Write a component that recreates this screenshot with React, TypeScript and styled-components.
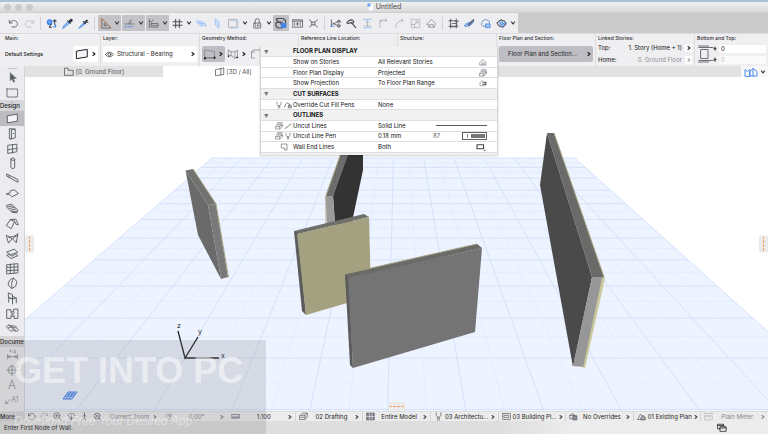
import React, { ReactNode } from "react";
import styled, { createGlobalStyle, css } from "styled-components";

const Global = createGlobalStyle`
  *, *::before, *::after { box-sizing: border-box; }
  body { margin: 0; }
  body, button, input {
    font-family: Inter, "Liberation Sans", sans-serif;
    font-size: 6px;
    line-height: 8px;
    color: #111113;
  }
  button { border: 0; padding: 0; margin: 0; background: none; }
`;

/* ---------- icons ---------- */

const INK = "#4a4f57";
const BLUE = "#3f82ea";

const Svg = styled.svg<{ $w: number; $h: number }>`
  display: block;
  flex: none;
  width: ${(p) => p.$w}px;
  height: ${(p) => p.$h}px;
  fill: none;
  stroke: currentColor;
  stroke-linecap: round;
  stroke-linejoin: round;
`;

type IconProps = { w?: number; h?: number; box?: string; children: ReactNode };
const Icon = ({ w = 12, h = 12, box = "0 0 24 24", children }: IconProps) => (
  <Svg $w={w} $h={h} viewBox={box} strokeWidth={1.7} aria-hidden="true">
    {children}
  </Svg>
);

const Chevron = () => (
  <Icon w={4} h={6} box="0 0 8 12">
    <path d="M2 3l4 3-4 3" strokeWidth={2.2} />
  </Icon>
);
const Down = () => (
  <Icon w={6} h={4} box="0 0 12 8">
    <path d="M3 2l3 4 3-4" strokeWidth={2.4} />
  </Icon>
);

const icons: Record<string, ReactNode> = {
  undo: <path d="M3 5v6h6M3.500 10.500C7 5.500 13 4 17.500 7c5 3.500 4 10-1 12.500h-8" />,
  redo: <path d="M21 5v6h-6M20.500 10.500C17 5.500 11 4 6.500 7c-5 3.500-4 10 1 12.500h8" stroke="#b4b7bb" />,
  find: (
    <>
      <circle cx="8" cy="9" r="5" fill="#67a3f2" stroke={BLUE} strokeWidth="2.500" />
      <path d="M11 14l-4 6h5M19 5v9M16 7l3-3 3 3" stroke="#3b4654" strokeWidth="2.200" />
      <path d="M16 19h5v-4" stroke={BLUE} strokeWidth="2.500" />
    </>
  ),
  dropper: (
    <>
      <path d="M2 22l2-5 9-9 3 3-9 9z" stroke={BLUE} fill="#8fbcf5" />
      <path d="M12 6l6 6M15 8l4-5c2-1 4 1 3 3l-5 4z" stroke="#2c3442" fill="#2c3442" strokeWidth="2.200" />
    </>
  ),
  syringe: (
    <>
      <path d="M2 22l5-6 6-6 2 3-6 5z" stroke={BLUE} fill="#8fbcf5" />
      <path d="M11 7l6 6M13 10l6-6 2 2-6 6zM19 9l3 1" stroke="#2c3442" fill="#2c3442" strokeWidth="2" />
    </>
  ),
  ruler: (
    <>
      <path d="M4 2v20h19z" stroke="#575c63" />
      <path d="M9 12v5h5z" stroke="#575c63" />
      <path d="M2 2v20M4 1l19 18" stroke="#e2935b" strokeWidth="1.600" />
    </>
  ),
  snap: (
    <>
      <path d="M2 13h20M9 13l9-9M13 5v8" stroke="#6d737c" />
      <path d="M2 19h16" stroke={BLUE} strokeDasharray="4 3" />
    </>
  ),
  tracker: (
    <>
      <path d="M3 3v18M3 8h5l3-4" stroke="#575c63" />
      <rect x="7" y="12" width="15" height="8" rx="1" stroke="#575c63" />
      <path d="M10 16h3M15 16h5" stroke="#575c63" />
    </>
  ),
  grid: <path d="M8 3v18M16 3v18M2 8h20M2 16h20" strokeWidth="2.200" />,
  planeA: <path d="M1 7h13l9 10H10zM6 7l9 10M5 12h13" stroke="#8db9f1" fill="#cfe1fb" strokeWidth="1.400" />,
  planeB: <path d="M8 2l7 6v14l-7-6z" stroke="#8db9f1" fill="#cfe1fb" />,
  box: (
    <>
      <path d="M5 6h17v16H5" stroke="#a9c9f3" />
      <rect x="2" y="3" width="17" height="17" stroke="#a2a6ab" />
    </>
  ),
  lock: (
    <>
      <rect x="4" y="11" width="15" height="11" rx="1" />
      <path d="M7 11V6a4.500 4.500 0 019 0v5M8 15v3M12 15v3M15 15v3" />
    </>
  ),
  trace: (
    <>
      <path d="M3 3h13l5 4v5M3 3v3l4 4h8M2 11h8l4 4v7H6l-4-4z" strokeWidth="2.400" />
      <rect x="13" y="13" width="9" height="8" fill={BLUE} stroke={BLUE} />
    </>
  ),
  dims: (
    <>
      <rect x="1" y="4" width="22" height="16" />
      <path d="M5 10v6M9 13h5M12 10v6M18 10v6M1 7h22" />
    </>
  ),
  cross: <path d="M3 4l6 5M21 4l-6 5M3 20l6-5M21 20l-6-5M9 9h6v6H9z" />,
  trim: (
    <>
      <path d="M3 4v14M6 14l15-9M6 11l15 8" />
      <path d="M1 18h8" stroke={BLUE} />
      <circle cx="19" cy="8" r="3" />
      <circle cx="19" cy="17" r="3" />
    </>
  ),
  hammer: <path d="M2 11c2-5 6-7 11-7l4 4-3 5-4-3-4 2zM12 10l9 11" strokeWidth="2.600" />,
  align: (
    <>
      <path d="M3 3h18M3 21h18" stroke="#8cb6ee" />
      <path d="M12 6v12M8 10l4-4 4 4M6 17h12" stroke="#a8adb4" />
    </>
  ),
  corner: <path d="M4 21V5h16M9 9l-5-4M17 2v6" stroke="#a9adb2" />,
  fillet: <path d="M4 20C5 11 11 5 20 5M16 9l4-4-4-3" stroke="#a9adb2" />,
  resize: (
    <>
      <rect x="3" y="3" width="18" height="18" stroke="#b4b7bb" strokeDasharray="3 2" />
      <path d="M3 14h7v7M10 14l7-7M12 7h5v5" stroke="#a9adb2" />
    </>
  ),
  house: <path d="M2 13L12 3l10 10-3 3v4H6v-4zM8 20v-6h8v6" stroke="#8d9198" />,
  group: (
    <>
      <rect x="6" y="6" width="13" height="13" />
      <path d="M2 6h5M6 2v5M18 2v20M15 7h8M2 18h20M6 15v7M9 12h8" />
    </>
  ),
  pencil: (
    <>
      <path d="M2 15c4-6 9-3 19-8-4 9-11 12-19 11z" fill="#a3c6f8" stroke={BLUE} />
      <path d="M9 14L20 3l2 2L11 16z" stroke="#4a4f57" fill="#6b727c" />
    </>
  ),
  cloud: (
    <>
      <path d="M3 13l3-7 7-3 7 4 1 7-5 4H7z" stroke="#5d87c0" />
      <rect x="13" y="13" width="9" height="8" fill="#a3c6f8" stroke={BLUE} />
    </>
  ),
  cube: (
    <>
      <path d="M2 11l8-7 9 3 3 6-7 7-9-3z" strokeWidth="2.200" />
      <circle cx="12" cy="12" r="4" stroke={BLUE} fill="#8fbcf5" />
      <path d="M17 12l5-1M15 20l3-6" stroke={BLUE} />
    </>
  ),
  cursor: <path d="M7 2v17l4-4 3 7 3-1-3-7h6z" fill="#565b63" stroke="#565b63" strokeWidth="1" />,
  marquee: <rect x="2" y="4" width="21" height="16" strokeDasharray="2.500 2" />,
  wall: <path d="M3 7l18-3v13L3 20z" fill="#f3f4f6" />,
  door: <path d="M7 3l10 1v16l-7 2H7zM17 4l-7 1v17M13 12h1" />,
  window: <path d="M4 6l16-2v14L4 21zM12 5v15M4 14l16-2" />,
  column: <path d="M9 4v15c0 3 7 3 7 0V4M9 4c0 3 7 3 7 0s-7-3-7 0" />,
  beam: <path d="M2 4l20 10v5L2 8zM6 6v4" />,
  slab: <path d="M1 13l6-2 1-4 7-2 8 7-12 6-4-4z" />,
  stair: <path d="M2 6l8-2 12 11-2 5-9-1L2 10zM4 9l8-2M7 12l8-2M10 15l8-2M11 18l9-1" />,
  roof: <path d="M1 15L8 5l10-1 5 10h-4l-3-6-6 13zM8 5l8 3" />,
  shell: <path d="M1 6c7 5 13 4 21-3l-3 17-7-8-7 8zM5 10l7 2 9-6" />,
  sheet: <path d="M2 9l13-5 7 6-13 4zM2 15l4-1 5 3 7-4 4 3-12 5z" />,
  curtain: <path d="M2 5l20-2v17L2 22zM8 4v17M15 4v17M2 10l20-1M2 16l20-1" />,
  morph: <path d="M4 14C4 7 9 3 14 2l6 6-2 9-7 4zM14 2c-4 6-4 12-3 19" />,
  chair: <path d="M5 2l7 3v8l-7-3zM5 10v9M5 10l7 3 7-2-7-3M12 13v9M19 11v9" />,
  zone: <path d="M2 5h7v4h5V4h8v17h-7v-4H9v4H2zM9 10l6 6M15 10l-6 6" />,
  mesh: <path d="M1 8c6-6 10 3 14-2l8 9c-5 6-9-3-13 2zM5 5l9 10M10 6l8 10M4 11c6-5 10 3 15-2" strokeWidth="1.500" />,
  dimension: (
    <>
      <path d="M2 16h20M3 12v8M21 12v8M8 3v4M11 7h1M15 8h3l-2-2 2-1-2-2" />
      <path d="M7 14l-4 2 4 2M17 14l4 2-4 2" />
    </>
  ),
  level: (
    <>
      <circle cx="11" cy="13" r="7" />
      <path d="M11 3v20M1 13h20M21 4v4" />
    </>
  ),
  rotate: <path d="M4 10a9 9 0 111 7M4 4v6h6" />,
  rotateR: <path d="M20 10a9 9 0 10-1 7M20 4v6h-6" stroke="#a0a3a8" />,
  zoomIn: <><circle cx="10" cy="10" r="8" /><path d="M16 16l6 6M7 10h6M10 7v6" /></>,
  orbit: <path d="M8 14C-2 10 5 4 12 4s14 6 4 10M12 10v10M8 16l4 5 4-5" />,
  walk: <path d="M12 2v6M8 11l4-3 4 3M12 8v8l4 6M12 16l-5 6" />,
  zoomFit: <><circle cx="11" cy="11" r="8" /><path d="M17 17l5 5M7 7l8 8M15 7l-8 8" /></>,
  angle: <path d="M3 12c3-8 12-8 16-2M19 4v7h-6M8 13l5-4 5 5-5 6z" stroke="#8b8f95" />,
  scale: <path d="M1 7h22v9H1zM5 12v4M10 12v4M14 12v4M19 12v4" />,
  layers: <path d="M6 7l4-4h12v11l-4 4M2 9h14v11H2zM16 9l6-6M2 14h14" />,
  parts: <><rect x="2" y="3" width="20" height="18" fill="#7d828a" /><path d="M2 12h20M9 4v16M16 4v16" stroke="#eee" /></>,
  penset: <path d="M6 2v8l4 4v8M18 2v8l-4 4v8M10 14h4" />,
  mvo: <><rect x="1" y="4" width="22" height="16" rx="2" /><rect x="6" y="9" width="12" height="6" /></>,
  override: <><path d="M2 9l7-5 7 5H2v9h7" /><rect x="11" y="10" width="10" height="11" fill="#8b9097" /></>,
  renovate: <><path d="M2 20l7-14 6 6M2 20h9" /><path d="M11 14l5-5 6 5v7H11z" fill="#a4a8ae" /></>,
  ruler2: <path d="M2 4h20M2 2v4M22 2v4M2 10h20v11H2zM7 10v4M12 10v4M17 10v4" stroke="#b2b4b8" />,
  windows: <><rect x="2" y="3" width="14" height="11" /><rect x="8" y="9" width="14" height="11" fill="#ececec" /><path d="M8 12h14M2 6h14" /></>,
  storyHouse: <path d="M3 12l9-8 9 8v9H3zM8 21v-6M12 21V11M16 21v-6" stroke="#74797f" />,
  stack: <path d="M2 14h12v7H2zM2 14l6-5h14v6l-8 6M14 14l8-5M5 6h17M8 2h14" stroke="#5d636b" />,
  range: <><path d="M3 11l7-7 7 7M3 11v9h14" stroke="#74797f" /><path d="M11 11h11M11 16h11M19 9v9" stroke="#3a3f46" strokeWidth="2.200" /></>,
  wallEnd: <path d="M5 3h16v18h-7v-6H5z" />,
  plan: <path d="M2 3h8v5h12v12H2z" strokeWidth="1.800" />,
  view3d: <path d="M2 6l12-2v15L2 21zM14 4l7-2v16l-7 1" strokeWidth="1.800" />,
  eye: <><path d="M1 12c6-8 16-8 22 0-6 8-16 8-22 0z" /><circle cx="12" cy="12" r="4" /></>,
  wallGeo: <><path d="M2 4l19 3v12L2 20z" stroke="#85898f" /><path d="M2 20h20" stroke="#6b7078" strokeDasharray="3 2" /><path d="M21 19v1M2 20v1" stroke="#222" strokeWidth="4" /></>,
  curved: <><path d="M3 4c5 5 12 5 18 0v13l-6 4-4-5-8-2zM8 7v9M16 7v13" stroke="#8a8e95" /><path d="M20 19h1M3 16v1" stroke="#222" strokeWidth="3" /></>,
  boxGeo: <path d="M3 8l4-4h14v13M3 8v12h6M3 8h6" stroke="#8a8e95" />,
  penY: <path d="M6 3v7l4 4v7M18 3v7l-4 4v7M10 14h4" />,
  fillCurve: <><path d="M2 18C5 6 9 3 14 8l6 5" strokeWidth="2.200" /><rect x="13" y="13" width="9" height="8" rx="1" fill="#b8bbc0" /></>,
  slash: <path d="M3 20L21 6" strokeWidth="2.200" />,
  endBoth: <><rect x="1" y="5" width="18" height="11" stroke="#3e434a" strokeWidth="3" /><path d="M22 20h1" stroke="#222" strokeWidth="3" /></>,
};

const Glyph = ({ name, size = 12 }: { name: string; size?: number }) => (
  <Icon w={size} h={size}>{icons[name]}</Icon>
);

/* ---------- window ---------- */

const Window = styled.div`
  position: relative;
  display: flex;
  flex-direction: column;
  min-height: 100vh;
  overflow: hidden;
  background: #ececee;
  border-top: 2px solid #a9c3d3;
`;

const TitleBar = styled.header`
  display: grid;
  grid-template-columns: 1fr auto 1fr;
  align-items: center;
  height: 11px;
  padding: 0 4px;
  background: linear-gradient(#efefef, #d9d9d9);
  border-bottom: 1px solid #cfcfcf;
`;
const Lights = styled.div`
  display: flex;
  gap: 4px;
`;
const Light = styled.button`
  width: 7px;
  height: 7px;
  border-radius: 50%;
  background: #cacaca;
`;
const Title = styled.h1`
  display: flex;
  align-items: center;
  gap: 2px;
  margin: 0;
  font-size: 7px;
  font-weight: 400;
  color: #4c4c4c;
`;

const ToolbarRow = styled.div`
  display: flex;
  height: 20px;
  background: #cbcbcb;
`;
const Toolbar = styled.div`
  display: flex;
  align-items: center;
  padding: 0 1px 0 5px;
  background: #eeeef0;
  color: ${INK};
`;
const Tool = styled.button<{ $on?: boolean }>`
  display: flex;
  align-items: center;
  justify-content: center;
  width: 16px;
  height: 16px;
  border-radius: 1px;
  color: inherit;
  background: ${(p) => (p.$on ? "#c0c0c5" : "none")};
`;
const Toggle = styled.button`
  display: flex;
  align-items: center;
  justify-content: space-between;
  width: 23px;
  height: 16px;
  margin-left: 1px;
  padding: 0 1px 0 2px;
  border-radius: 1px;
  color: #34383e;
  background: #c3c3c8;
`;
const DropArrow = styled.button`
  display: flex;
  justify-content: center;
  width: 8px;
  color: #2f3338;
`;
const Divider = styled.span`
  width: 6px;
  height: 13px;
  background: linear-gradient(#d2d2d5, #d2d2d5) center / 1px 100% no-repeat;
`;

/* ---------- info bar ---------- */

const InfoBar = styled.div`
  display: grid;
  grid-template-columns: 100px repeat(6, 99px) minmax(0, 1fr);
  height: 33px;
  background: #efeff1;
  border-top: 1px solid #dcdcde;
`;
const Section = styled.section<{ $first?: boolean }>`
  display: flex;
  flex-direction: column;
  min-width: 0;
  padding: 0 2px 0 ${(p) => (p.$first ? 4 : 2)}px;
  border-left: 1px solid ${(p) => (p.$first ? "transparent" : "#dddddf")};
`;
const Caption = styled.h2`
  margin: 0;
  font-size: 5px;
  line-height: 9px;
  font-weight: 500;
  white-space: nowrap;
  color: #2c2c2f;
`;
const Body = styled.div`
  flex: 1;
  display: flex;
  align-items: center;
  padding-bottom: 1px;
`;
const Spacer = styled.span`
  flex: 1;
`;
const Field = styled.button<{ $tone?: "dark" | "plain"; $grow?: boolean }>`
  display: flex;
  align-items: center;
  justify-content: space-between;
  gap: 3px;
  height: 16px;
  padding: 0 2px;
  border-radius: 2px;
  white-space: nowrap;
  color: #1c1e22;
  background: ${(p) => (p.$tone === "dark" ? "#bdbdc3" : p.$tone === "plain" ? "none" : "#fff")};
  ${(p) => p.$grow && css`flex: 1;`}
`;
const SettingsName = styled.span`
  font-size: 5px;
  font-weight: 500;
`;
const StoryGrid = styled.div`
  flex: 1;
  display: grid;
  grid-template-columns: auto 1fr 7px;
  gap: 3px;
  padding-bottom: 1px;
  align-items: center;
`;
const Story = styled.span<{ $dim?: boolean }>`
  text-align: right;
  color: ${(p) => (p.$dim ? "#8e8e91" : "inherit")};
`;
const Step = styled.button<{ $dim?: boolean }>`
  display: flex;
  align-items: center;
  justify-content: center;
  height: 8px;
  border-radius: 1px;
  background: #fff;
  color: ${(p) => (p.$dim ? "#aaa" : "#222")};
`;
const Inputs = styled.div`
  flex: 1;
  display: flex;
  flex-direction: column;
  gap: 3px;
  min-width: 0;
  margin-left: 2px;
`;
const NumberBox = styled.input`
  width: 100%;
  height: 8px;
  padding: 0 2px;
  border: 0;
  background: #fff;
  &:disabled { color: #b8b8b8; background: #fafafa; }
`;

/* ---------- work area ---------- */

const Work = styled.div`
  flex: 1;
  display: grid;
  grid-template-columns: 25px minmax(0, 1fr);
`;
const Toolbox = styled.nav`
  display: flex;
  flex-direction: column;
  background: #ececee;
  border-right: 1px solid #d4d4d6;
  color: #565b63;
`;
const Grip = styled.span`
  align-self: center;
  width: 9px;
  height: 1px;
  margin: 2px 0 1px;
  background: #c6c6c8;
`;
const ToolItem = styled.button<{ $on?: boolean; $dim?: boolean }>`
  display: flex;
  align-items: center;
  justify-content: center;
  height: 15px;
  font-size: 12px;
  font-weight: 300;
  color: ${(p) => (p.$dim ? "#8c8f94" : "inherit")};
  background: ${(p) => (p.$on ? "#bcbcc1" : "none")};
`;
const ToolGroup = styled.h3`
  margin: 0;
  height: 11px;
  overflow: hidden;
  font-size: 6px;
  line-height: 11px;
  font-weight: 500;
  color: #222;
  background: #d6d6d8;
`;
const Small = styled.span`
  font-size: 7px;
  font-weight: 400;
`;

const Main = styled.main`
  display: flex;
  flex-direction: column;
  min-width: 0;
`;
const Tabs = styled.div`
  display: grid;
  grid-template-columns: 138px 140px 1fr 27px;
  height: 11px;
  background: #e2e2e3;
`;
const Tab = styled.button<{ $active?: boolean }>`
  display: flex;
  align-items: center;
  justify-content: center;
  gap: 2px;
  color: #4c4e52;
  background: ${(p) => (p.$active ? "#fff" : "none")};
`;
const CornerMenu = styled.button`
  grid-column: 4;
  display: flex;
  align-items: center;
  justify-content: center;
  gap: 2px;
  color: #2e3238;
  background: #f8f8f8;
`;
const Canvas = styled.div`
  position: relative;
  flex: 1;
  min-height: 300px;
  background: #fff;
`;
const Scene = styled.svg`
  position: absolute;
  inset: 0;
  width: 100%;
  height: 100%;
`;
const EdgeHandle = styled.button<{ $side: "left" | "right" | "bottom" }>`
  position: absolute;
  display: flex;
  align-items: center;
  justify-content: center;
  border-radius: 1px;
  background: #ebebec;
  ${(p) =>
    p.$side === "bottom"
      ? css`left: 50%; bottom: 0; width: 17px; height: 9px; transform: translateX(-50%);`
      : css`top: 50%; ${p.$side}: 0; width: 9px; height: 17px; transform: translateY(-50%);`}
`;
const Dashes = styled.span<{ $row?: boolean }>`
  ${(p) =>
    p.$row
      ? css`width: 15px; height: 1px; background: repeating-linear-gradient(90deg, #f1a45f 0 3px, transparent 3px 4px);`
      : css`width: 1px; height: 15px; background: repeating-linear-gradient(#f1a45f 0 3px, transparent 3px 4px);`}
`;

/* Floor grid: one vanishing point, evenly spaced cells in depth. */
const VX = 397;
const VY = -2;
const TOP = 158;
const BOTTOM = 440;
const depths = Array.from({ length: 24 }, (_, i) => -2 + i / 2);
const spokes = Array.from({ length: 25 }, (_, i) => -6 + i / 2);
const slope = (n: number) => -0.0225 + 0.189 * n;
const rayX = (n: number, y: number) => VX + slope(n) * (y - VY);

const MAJOR = "#d6e2fb";
const MINOR = "#e5edfd";

const Model = () => (
  <Scene viewBox="25 77 743 334" preserveAspectRatio="xMidYMid slice" role="img" aria-label="3D view">
    <path
      d={`M${rayX(-6, TOP)} ${TOP}H${rayX(6, TOP)}L${rayX(6, BOTTOM)} ${BOTTOM}H${rayX(-6, BOTTOM)}z`}
      fill="#edf3ff"
    />
    {depths.map((k) => {
      const y = 2880 / (16 - k) + VY;
      return (
        <path key={k} d={`M${rayX(-6, y)} ${y}H${rayX(6, y)}`} stroke={Number.isInteger(k) ? MAJOR : MINOR} />
      );
    })}
    {spokes.map((n) => (
      <path
        key={n}
        d={`M${rayX(n, TOP)} ${TOP}L${rayX(n, BOTTOM)} ${BOTTOM}`}
        stroke={Number.isInteger(n) ? MAJOR : MINOR}
      />
    ))}
    {/* far left wall */}
    <path d="M185.500 170.500L208 205L221 279L198 235z" fill="#6a6a6a" />
    <path d="M185.500 170.500L193 169L216 204L208 205z" fill="#727271" />
    <path d="M208 205L216 204L228 277L221 279z" fill="#7a7a7a" />
    <path d="M193 169L216 204L228.500 277.500" stroke="#aaa683" fill="none" />
    {/* rear wall */}
    <path d="M333 196L349 150H363V170L352 222L335 225z" fill="#333" />
    <path d="M325.500 196L342 150H350L333 196z" fill="#6c6c6a" />
    <path d="M325.500 196H333L335 225H327z" fill="#9a9a9a" />
    <path d="M342 150L326 196V225" stroke="#aba985" fill="none" />
    {/* olive wall */}
    <path d="M294 231L364 214L369 217L298 234z" fill="#6f6f6c" />
    <path d="M294 231L298 233L306 315L302 311z" fill="#5c5c5c" />
    <path d="M297 234L369 217L371 296L306 315z" fill="#a3a17f" />
    {/* front wall */}
    <path d="M345 274L477 244L482 248L348 279z" fill="#6a6a68" />
    <path d="M345 274L477 244" stroke="#a4a17d" />
    <path d="M345 274L349 278L353 368L350 365z" fill="#5c5c5c" />
    <path d="M348 278L482 248L475 332L353 368z" fill="#747474" />
    {/* right wall */}
    <path d="M547 133L540 185L573 367L592 277z" fill="#4a4a4a" />
    <path d="M547 133H554L604 277L592 277z" fill="#6a6a69" />
    <path d="M554 133L604 277" stroke="#aaa782" />
    <path d="M592 277L604 277L584 367L573 366z" fill="#979797" />
    <path d="M602 278H605L585 368H583z" fill="#cbc99c" />
    {/* axes */}
    <g stroke="#222" strokeWidth="1.300" fill="none">
      <path d="M178 331l7 27 13-21M185 358h34" />
    </g>
    <g fill="#222" fontFamily="Inter, sans-serif" fontSize="7">
      <text x="177" y="328">z</text>
      <text x="198" y="334">y</text>
      <text x="221" y="358">x</text>
    </g>
    {/* editing plane */}
    <g stroke={BLUE} strokeWidth="1" fill="#cfe0fb">
      <path d="M63 399l5-7h9l-5 7z" />
      <path d="M66 399l5-7M69 399l5-7M65 396h9M67 394h9" />
    </g>
  </Scene>
);

/* ---------- floor plan palette ---------- */

const Palette = styled.div`
  position: absolute;
  z-index: 2;
  top: 44px;
  left: 260px;
  width: 238px;
  padding-bottom: 2px;
  background: #f0f0f0;
  border-left: 1px solid #d6d6d8;
  border-right: 1px solid #d6d6d8;
  box-shadow: 0 1px 2px rgba(0, 0, 0, 0.2);
`;
const PaletteTable = styled.table`
  width: 100%;
  height: 107px;
  table-layout: fixed;
  border-collapse: collapse;
  tr { height: 10px; }
  td, th {
    padding: 0;
    border-bottom: 1px solid #dfdfe1;
    white-space: nowrap;
    text-align: left;
    line-height: 8px;
  }
`;
const GroupRow = styled.tr`
  background: #f1f1f2;
`;
const SettingRow = styled.tr`
  background: #fff;
`;
const GroupName = styled.th`
  font-weight: 700;
`;
const FoldCell = styled.td`
  width: 13px;
`;
const Fold = styled.button`
  display: flex;
  margin-left: 3px;
  color: #77797d;
`;
const Pair = styled.span`
  display: flex;
  align-items: center;
  justify-content: center;
  gap: 1px;
  color: ${INK};
`;
const EndCell = styled.div`
  display: flex;
  align-items: center;
  justify-content: flex-end;
  padding-right: 10px;
  color: #555a61;
`;
const LineSample = styled.span`
  width: 51px;
  height: 1px;
  background: #5c5c5c;
`;
const PenSwatch = styled.button`
  display: flex;
  gap: 3px;
  width: 25px;
  height: 8px;
  padding: 1px 1px 1px 4px;
  border: 1px solid #626262;
  background: #fff;
`;
const PenTick = styled.span`
  width: 1px;
  background: #888;
`;
const PenInk = styled.span`
  flex: 1;
  background: #777;
`;

type PaletteRow = { title?: string; label?: string; value?: string; lead?: string[]; extra?: string; end?: ReactNode };
const paletteRows: PaletteRow[] = [
  { title: "FLOOR PLAN DISPLAY" },
  { label: "Show on Stories", value: "All Relevant Stories", end: <Glyph name="storyHouse" size={8} /> },
  { label: "Floor Plan Display", value: "Projected", end: <Glyph name="stack" size={8} /> },
  { label: "Show Projection", value: "To Floor Plan Range", end: <Glyph name="range" size={8} /> },
  { title: "CUT SURFACES" },
  { label: "Override Cut Fill Pens", value: "None", lead: ["penY", "fillCurve"] },
  { title: "OUTLINES" },
  { label: "Uncut Lines", value: "Solid Line", lead: ["stack", "slash"], end: <LineSample /> },
  {
    label: "Uncut Line Pen",
    value: "0.18 mm",
    lead: ["stack", "penY"],
    extra: "87",
    end: <PenSwatch aria-label="Pen 87"><PenTick /><PenInk /></PenSwatch>,
  },
  {
    label: "Wall End Lines",
    value: "Both",
    lead: ["wallEnd"],
    end: <Icon w={12} h={8} box="0 0 24 22">{icons.endBoth}</Icon>,
  },
];

/* ---------- status ---------- */

const StatusBar = styled.div`
  display: grid;
  grid-template-columns: 25px 79px 56px 67px repeat(8, minmax(0, 1fr));
  height: 10px;
  background: #ececed;
  border-top: 1px solid #dcdcde;
  color: ${INK};
`;
const More = styled.button`
  text-align: left;
  font-weight: 500;
  color: #222;
  background: #d6d6d8;
`;
const NavTools = styled.div`
  display: flex;
  align-items: center;
  justify-content: space-around;
`;
const NavButton = styled.button`
  color: inherit;
`;
const Option = styled.button<{ $dim?: boolean; $line?: boolean }>`
  display: flex;
  align-items: center;
  gap: 2px;
  min-width: 0;
  padding: 0 3px;
  white-space: nowrap;
  color: ${(p) => (p.$dim ? "#85878b" : INK)};
  border-left: 1px solid ${(p) => (p.$line ? "#d4d4d6" : "transparent")};
`;
const OptionText = styled.span<{ $dim?: boolean }>`
  flex: 1;
  text-align: center;
  color: ${(p) => (p.$dim ? "#85878b" : "#1c1d20")};
`;
const MessageBar = styled.footer`
  display: flex;
  align-items: center;
  justify-content: space-between;
  height: 13px;
  padding: 0 41px 0 4px;
  background: linear-gradient(90deg, #dedede, #dedede 65%, #ededed 75%);
`;

const Watermark = styled.div`
  position: absolute;
  z-index: 3;
  left: 0;
  bottom: 0;
  width: 266px;
  height: 94px;
  padding: 10px 0 0 14px;
  pointer-events: none;
  background: rgba(120, 120, 125, 0.2);
  font-family: "Liberation Sans", sans-serif;
  white-space: nowrap;
`;
const MarkName = styled.p`
  margin: 0;
  font-size: 36px;
  line-height: 42px;
  font-weight: 700;
  color: rgba(255, 255, 255, 0.5);
`;
const MarkLine = styled.p`
  margin: 21px 0 0;
  font-size: 12px;
  line-height: 16px;
  font-style: italic;
  color: rgba(255, 255, 255, 0.42);
`;

const options = [
  { icon: "scale", text: "1:100" },
  { icon: "layers", text: "02 Drafting" },
  { icon: "parts", text: "Entire Model" },
  { icon: "penset", text: "03 Architectu..." },
  { icon: "mvo", text: "03 Building Pl..." },
  { icon: "override", text: "No Overrides" },
  { icon: "renovate", text: "01 Existing Plan" },
  { icon: "ruler2", text: "Plain Meter", dim: true },
];

const designTools = [
  "wall", "door", "window", "column", "beam", "slab", "stair", "roof",
  "shell", "sheet", "curtain", "morph", "chair", "zone", "mesh",
];

const Tools = ({ names }: { names: string[] }) => (
  <>
    {names.map((n) => (
      <Tool key={n} aria-label={n}><Glyph name={n} size={11} /></Tool>
    ))}
  </>
);
const Menu = ({ label }: { label: string }) => (
  <DropArrow aria-label={label}><Down /></DropArrow>
);

export default function App() {
  return (
    <>
      <Global />
      <Window>
        <TitleBar>
          <Lights>
            <Light aria-label="Close" />
            <Light aria-label="Minimize" />
            <Light aria-label="Zoom" />
          </Lights>
          <Title>
            <Icon w={7} h={8} box="0 0 14 16">
              <path d="M3 1h7l3 3v11H3z" fill="#fff" stroke="#c8d4e4" strokeWidth="1" />
              <path d="M1 1h6v6H1z" fill="#69a7f2" stroke="none" />
            </Icon>
            Untitled
          </Title>
        </TitleBar>

        <ToolbarRow>
          <Toolbar role="toolbar" aria-label="Standard">
            <Tools names={["undo", "redo"]} />
            <Divider />
            <Tools names={["find", "dropper", "syringe"]} />
            <Divider />
            {["ruler", "snap", "tracker"].map((n) => (
              <Toggle key={n} aria-label={n} aria-pressed="true">
                <Glyph name={n} size={11} />
                <Down />
              </Toggle>
            ))}
            <Tools names={["grid"]} />
            <Menu label="Grid options" />
            <Tools names={["planeA", "planeB", "box"]} />
            <Menu label="Plane options" />
            <Tools names={["lock"]} />
            <Menu label="Lock options" />
            <Tool $on aria-label="trace" aria-pressed="true"><Glyph name="trace" /></Tool>
            <Tools names={["dims", "cross"]} />
            <Divider />
            <Tools names={["trim", "hammer", "align", "corner", "fillet", "resize", "house"]} />
            <Divider />
            <Tools names={["group", "pencil", "cloud", "cube"]} />
            <Menu label="More tools" />
          </Toolbar>
        </ToolbarRow>

        <InfoBar>
          <Section $first>
            <Caption>Main:</Caption>
            <Body>
              <SettingsName>Default Settings</SettingsName>
              <Spacer />
              <Field aria-label="Wall defaults"><Icon w={14} h={14}>{icons.wall}</Icon><Chevron /></Field>
            </Body>
          </Section>
          <Section>
            <Caption>Layer:</Caption>
            <Body>
              <Field $grow>
                <Glyph name="eye" size={9} />
                Structural - Bearing
                <Spacer />
                <Chevron />
              </Field>
            </Body>
          </Section>
          <Section>
            <Caption>Geometry Method:</Caption>
            <Body>
              <Field $tone="dark" aria-label="Straight"><Glyph name="wallGeo" /><Chevron /></Field>
              <Field $tone="plain" aria-label="Curved"><Glyph name="curved" /><Chevron /></Field>
              <Field $tone="plain" aria-label="Box"><Glyph name="boxGeo" /></Field>
            </Body>
          </Section>
          <Section><Caption>Reference Line Location:</Caption></Section>
          <Section><Caption>Structure:</Caption></Section>
          <Section>
            <Caption>Floor Plan and Section:</Caption>
            <Body>
              <Field $tone="dark" $grow><Spacer />Floor Plan and Section...<Spacer /><Chevron /></Field>
            </Body>
          </Section>
          <Section>
            <Caption>Linked Stories:</Caption>
            <StoryGrid>
              <span>Top:</span><Story>1. Story (Home + 1)</Story><Step aria-label="Top story"><Chevron /></Step>
              <span>Home:</span><Story $dim>0. Ground Floor</Story><Step $dim aria-label="Home story"><Chevron /></Step>
            </StoryGrid>
          </Section>
          <Section>
            <Caption>Bottom and Top:</Caption>
            <Body>
              <Icon w={20} h={18} box="0 0 40 36">
                <path d="M3 2h20M8 9h14v18H8zM3 34h20M4 5h28M4 31h28" stroke="#6a6f76" strokeWidth="2" />
                <path d="M36 4v6M36 26v6M34 7h4M34 29h4" stroke="#444" strokeWidth="2.500" />
              </Icon>
              <Inputs>
                <NumberBox aria-label="Top offset" defaultValue="0" />
                <NumberBox aria-label="Bottom offset" defaultValue="0" disabled />
              </Inputs>
            </Body>
          </Section>
        </InfoBar>

        <Work>
          <Toolbox aria-label="Toolbox">
            <Grip />
            <ToolItem aria-label="Arrow"><Glyph name="cursor" size={11} /></ToolItem>
            <ToolItem aria-label="Marquee"><Glyph name="marquee" /></ToolItem>
            <ToolGroup>Design</ToolGroup>
            {designTools.map((n) => (
              <ToolItem key={n} $on={n === "wall"} aria-label={n}><Glyph name={n} size={13} /></ToolItem>
            ))}
            <ToolGroup>Docume</ToolGroup>
            <ToolItem $dim aria-label="Dimension"><Glyph name="dimension" size={13} /></ToolItem>
            <ToolItem $dim aria-label="Level"><Glyph name="level" size={13} /></ToolItem>
            <ToolItem $dim>A</ToolItem>
            <ToolItem $dim aria-label="Label">
              <Icon w={6} h={10} box="0 0 12 20"><path d="M2 16l8-7M1 12v5h5" /></Icon>
              <Small>A1</Small>
            </ToolItem>
          </Toolbox>

          <Main>
            <Tabs role="tablist">
              <Tab role="tab"><Glyph name="plan" size={10} />[0. Ground Floor]</Tab>
              <Tab role="tab" aria-selected="true" $active><Glyph name="view3d" size={10} />[3D / All]</Tab>
              <CornerMenu aria-label="View options">
                <Icon w={14} h={10} box="0 0 28 20">
                  <path d="M2 18V5l5 4 5-4v13zM12 9l6-6 8 6v9H12zM18 3v15" stroke={BLUE} strokeWidth="1.800" />
                </Icon>
                <Down />
              </CornerMenu>
            </Tabs>
            <Canvas>
              <Model />
              <EdgeHandle $side="left" aria-label="Left panel"><Dashes /></EdgeHandle>
              <EdgeHandle $side="right" aria-label="Right panel"><Dashes /></EdgeHandle>
              <EdgeHandle $side="bottom" aria-label="Bottom panel"><Dashes $row /></EdgeHandle>
            </Canvas>
          </Main>
        </Work>

        <StatusBar>
          <More>More</More>
          <NavTools>
            {["rotate", "rotateR", "zoomIn", "orbit", "walk", "zoomFit"].map((n) => (
              <NavButton key={n} aria-label={n}><Glyph name={n} size={9} /></NavButton>
            ))}
          </NavTools>
          <Option $dim><OptionText $dim>Current Zoom</OptionText><Chevron /></Option>
          <Option $dim><Glyph name="angle" size={9} /><OptionText $dim>0,00°</OptionText><Chevron /></Option>
          {options.map((o, i) => (
            <Option key={o.icon} $dim={o.dim} $line={i > 0}>
              <Glyph name={o.icon} size={9} />
              <OptionText $dim={o.dim}>{o.text}</OptionText>
              <Chevron />
            </Option>
          ))}
        </StatusBar>
        <MessageBar>
          Enter First Node of Wall.
          <Glyph name="windows" size={10} />
        </MessageBar>

        <Palette>
          <PaletteTable>
            <colgroup>
              <col width="13" /><col width="19" /><col width="85" /><col width="55" /><col />
            </colgroup>
            <tbody>
              {paletteRows.map((r) =>
                r.title ? (
                  <GroupRow key={r.title}>
                    <FoldCell>
                      <Fold aria-label={`Collapse ${r.title}`}>
                        <Icon w={5} h={5} box="0 0 10 10"><path d="M2 3h6L5 8z" fill="currentColor" /></Icon>
                      </Fold>
                    </FoldCell>
                    <td />
                    <GroupName colSpan={3}>{r.title}</GroupName>
                  </GroupRow>
                ) : (
                  <SettingRow key={r.label}>
                    <td />
                    <td><Pair>{r.lead?.map((n) => <Glyph key={n} name={n} size={8} />)}</Pair></td>
                    <td>{r.label}</td>
                    <td>{r.value}</td>
                    <td>
                      <EndCell>{r.extra && <><span>{r.extra}</span><Spacer /></>}{r.end}</EndCell>
                    </td>
                  </SettingRow>
                )
              )}
            </tbody>
          </PaletteTable>
        </Palette>

        <Watermark>
          <MarkName>GET INTO PC</MarkName>
          <MarkLine>Download Free Your Desired App</MarkLine>
        </Watermark>
      </Window>
    </>
  );
}
